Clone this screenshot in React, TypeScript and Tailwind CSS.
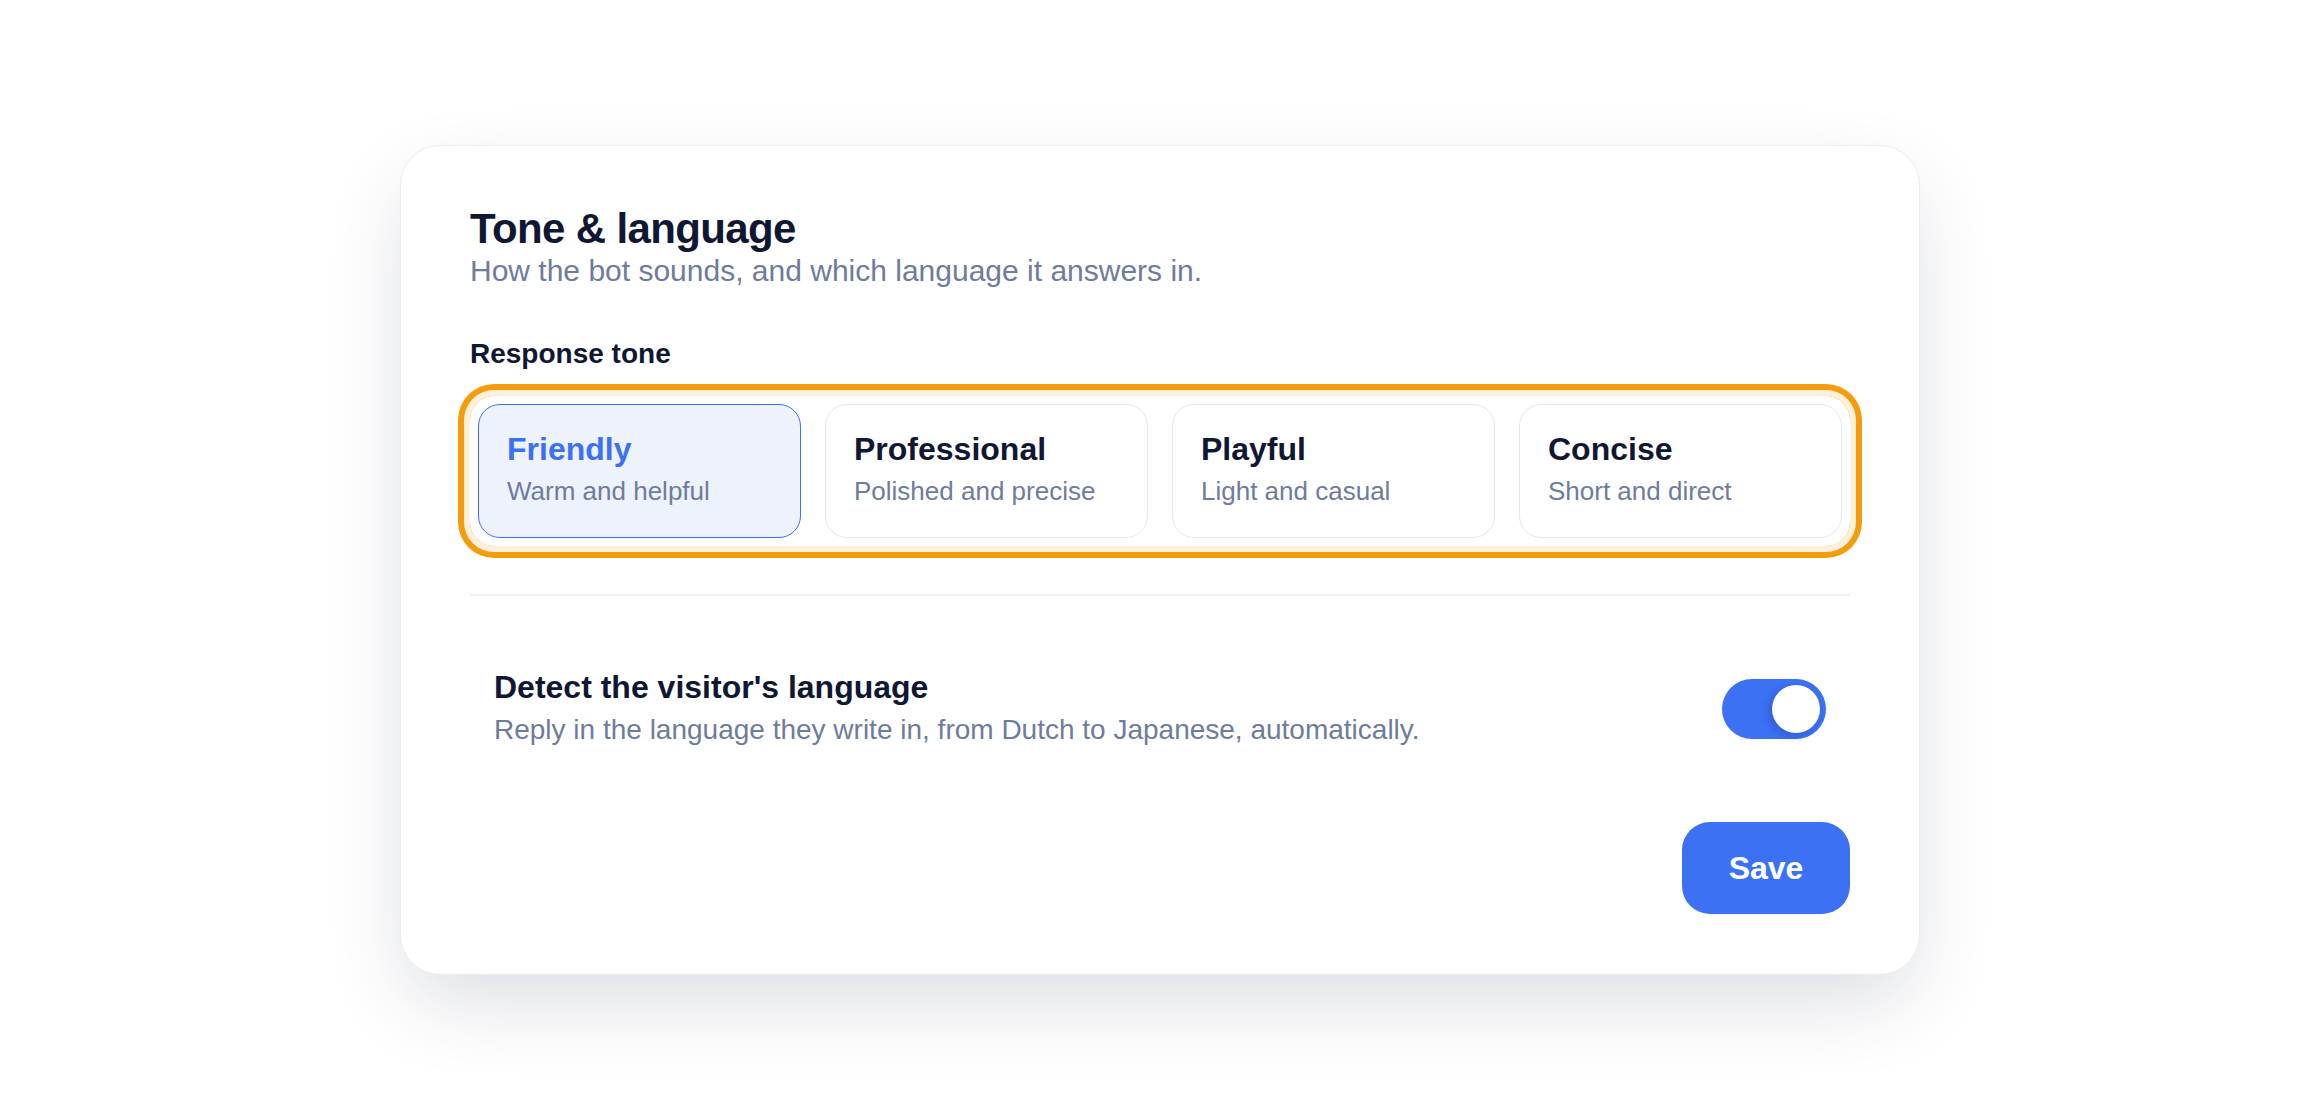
import React, { useState } from 'react';

const tones = [
  { id: 'friendly', title: 'Friendly', desc: 'Warm and helpful' },
  { id: 'professional', title: 'Professional', desc: 'Polished and precise' },
  { id: 'playful', title: 'Playful', desc: 'Light and casual' },
  { id: 'concise', title: 'Concise', desc: 'Short and direct' },
];

export default function App() {
  const [tone, setTone] = useState('friendly');
  const [detect, setDetect] = useState(true);

  return (
    <div
      className="min-h-screen w-full bg-white flex items-center justify-center"
      style={{ fontFamily: '"Liberation Sans", Arial, sans-serif' }}
    >
      <div className="w-[1520px] bg-white rounded-[40px] border border-[#e9ecf3] shadow-[0_32px_80px_-8px_rgba(30,41,80,0.16)] pt-[60px] pb-[60px] px-[69px]">
        {/* Header */}
        <h1 className="text-[42px] leading-[46px] font-bold tracking-[-0.015em] text-[#0f1733]">
          Tone &amp; language
        </h1>
        <p className="text-[30px] leading-[38px] text-[#6e7c9c]">
          How the bot sounds, and which language it answers in.
        </p>

        {/* Tone picker */}
        <div className="mt-[46px] text-[28px] leading-[36px] font-bold text-[#0f1733]">Response tone</div>
        <div
          role="radiogroup"
          className="mt-6 p-2 rounded-3xl grid grid-cols-4 gap-6 shadow-[0_0_0_6px_#fef0da,0_0_0_12px_#f39c0c]"
        >
          {tones.map((t) => {
            const active = t.id === tone;
            return (
              <button
                key={t.id}
                role="radio"
                aria-checked={active}
                onClick={() => setTone(t.id)}
                className={
                  active
                    ? 'text-left rounded-[22px] border-[1.5px] border-[#3c71f4] bg-[#eef2fd] px-[28px] pt-[24px] pb-[28px]'
                    : 'text-left rounded-[22px] border-[1.5px] border-[#e3e7f2] bg-white px-[28px] pt-[24px] pb-[28px]'
                }
              >
                <div
                  className={
                    active
                      ? 'text-[32px] leading-[40px] font-bold text-[#3c71f4]'
                      : 'text-[32px] leading-[40px] font-bold text-[#0f1733]'
                  }
                >
                  {t.title}
                </div>
                <div className="mt-1 text-[26px] leading-[36px] text-[#6e7c9c]">{t.desc}</div>
              </button>
            );
          })}
        </div>

        <div className="mt-12 h-[2px] bg-[#eef1f6]" />

        {/* Language detection */}
        <div className="mt-[47px] px-6 py-6 flex items-center justify-between">
          <div>
            <div className="text-[32px] leading-[40px] font-bold text-[#0f1733]">Detect the visitor's language</div>
            <div className="mt-[3px] text-[28px] leading-[40px] text-[#6e7c9c]">
              Reply in the language they write in, from Dutch to Japanese, automatically.
            </div>
          </div>
          <button
            role="switch"
            aria-checked={detect}
            onClick={() => setDetect(!detect)}
            className={
              detect
                ? 'w-[104px] h-[60px] rounded-full bg-[#3c71f4] p-[6px] flex justify-end'
                : 'w-[104px] h-[60px] rounded-full bg-[#d5dae6] p-[6px] flex justify-start'
            }
          >
            <span className="block w-[48px] h-[48px] rounded-full bg-white shadow-[-3px_3px_8px_rgba(20,40,120,0.3)]" />
          </button>
        </div>

        <div className="mt-[48px] flex justify-end">
          <button className="w-[168px] h-[92px] rounded-[28px] bg-[#3c71f4] text-white text-[32px] font-bold">
            Save
          </button>
        </div>
      </div>
    </div>
  );
}
